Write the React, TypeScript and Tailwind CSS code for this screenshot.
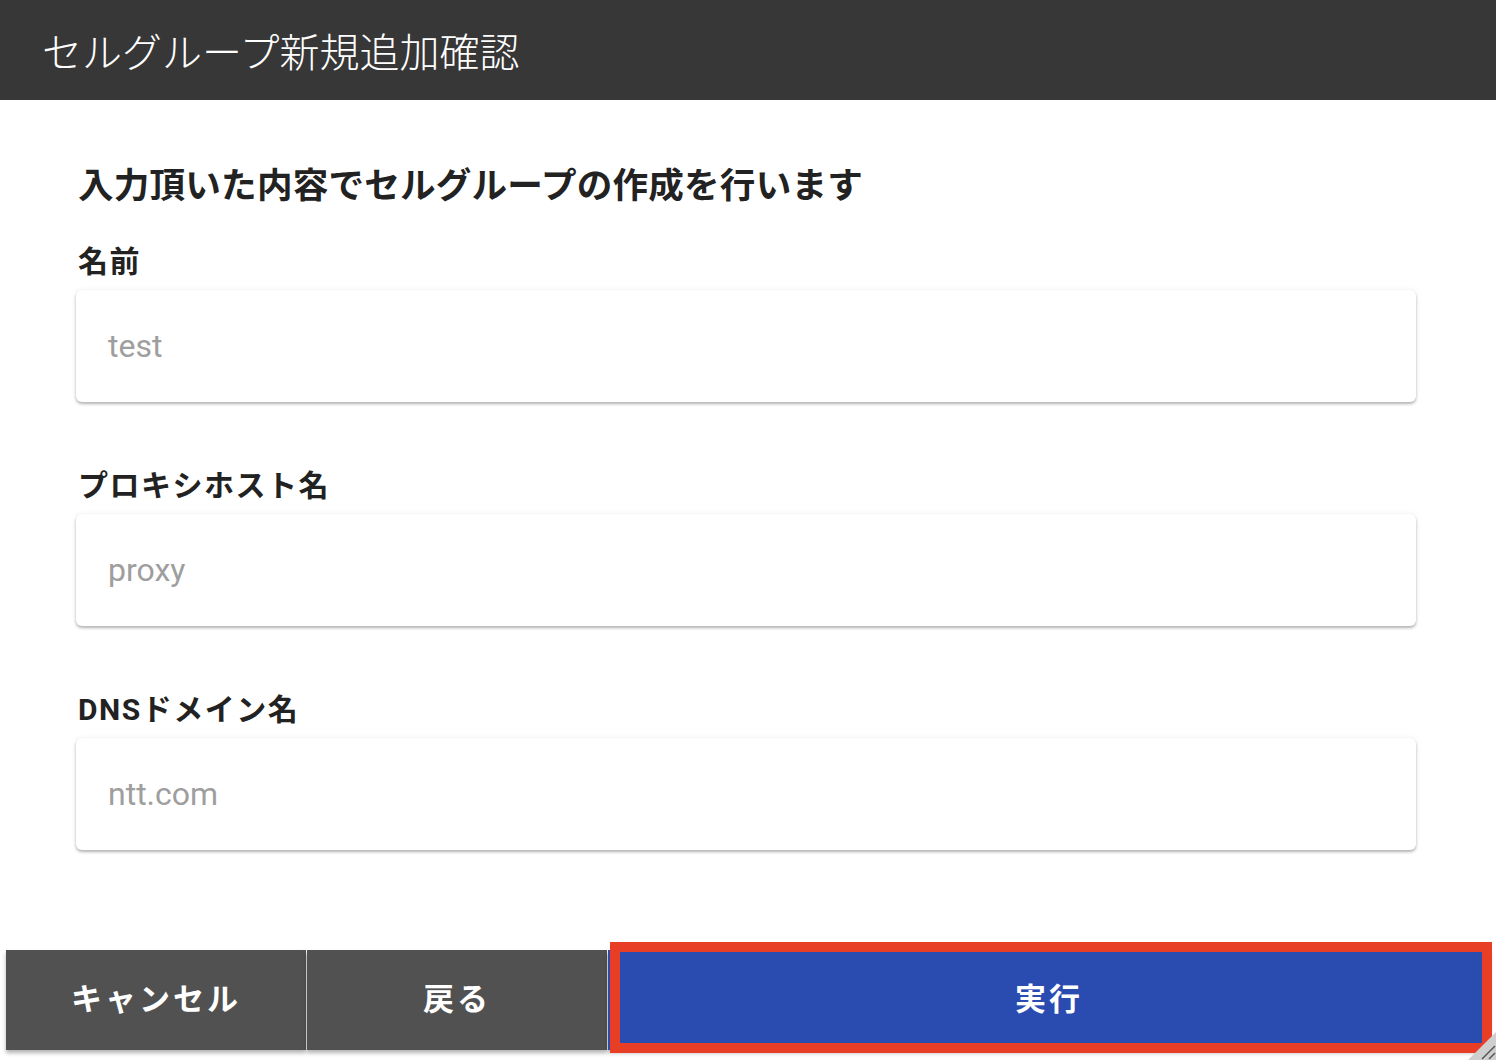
import React from "react";

const font = { fontFamily: "Roboto, 'Noto Sans CJK JP', sans-serif" };

function Field({ label, value }: { label: string; value: string }) {
  return (
    <div className="flex flex-col">
      <div className="h-[40px] flex items-center pl-[2px] text-[30px] font-bold text-[#222222] leading-none tracking-[1.5px]">
        {label}
      </div>
      <div className="mt-[8px] h-[112px] w-[1340px] rounded-[6px] bg-white shadow-[0_2px_3px_rgba(0,0,0,0.28),0_0_6px_rgba(0,0,0,0.06)] flex items-center pl-[32px] text-[32px] text-[#9e9e9e]">
        {value}
      </div>
    </div>
  );
}

export default function App() {
  return (
    <div className="relative w-[1496px] h-[1060px] bg-white overflow-hidden" style={font}>
      <div className="h-[100px] bg-[#373737] flex items-center pl-[42px] pt-[8px]">
        <span className="text-[40px] text-white font-light leading-none">セルグループ新規追加確認</span>
      </div>
      <div className="pl-[76px] pt-[62px] flex flex-col">
        <div className="h-[50px] flex items-center pl-[2px] text-[35.6px] font-bold text-[#222222] leading-none tracking-[0.2px]">
          入力頂いた内容でセルグループの作成を行います
        </div>
        <div className="mt-[30px] flex flex-col gap-[64px]">
          <Field label="名前" value="test" />
          <Field label="プロキシホスト名" value="proxy" />
          <Field label="DNSドメイン名" value="ntt.com" />
        </div>
      </div>
      <div className="mt-[100px] ml-[6px] flex h-[100px] gap-[1px]">
        <div className="w-[300px] bg-[#515151] shadow-[0_3px_4px_rgba(0,0,0,0.3)] flex items-center justify-center text-white text-[31px] font-bold tracking-[3px]">
          キャンセル
        </div>
        <div className="w-[300px] bg-[#515151] shadow-[0_3px_4px_rgba(0,0,0,0.3)] flex items-center justify-center text-white text-[31px] font-bold tracking-[3px]">
          戻る
        </div>
        <div className="relative w-[882px] bg-[#2a4bb0] shadow-[0_3px_4px_rgba(0,0,0,0.3)] flex items-center justify-center text-white text-[31px] font-bold tracking-[3px]">
          実行
          <div className="absolute left-[2px] top-[-8px] w-[882px] h-[111px] border-[10px] border-[#e93e26]" />
        </div>
      </div>
      <svg className="absolute right-0 bottom-0" width="28" height="28" viewBox="0 0 28 28">
        <polygon points="28,0 28,28 0,28" fill="#cfcfcf" />
        <line x1="14" y1="27" x2="27" y2="14" stroke="#555" strokeWidth="1.5" />
        <line x1="21" y1="27" x2="27" y2="21" stroke="#555" strokeWidth="1.5" />
      </svg>
    </div>
  );
}
